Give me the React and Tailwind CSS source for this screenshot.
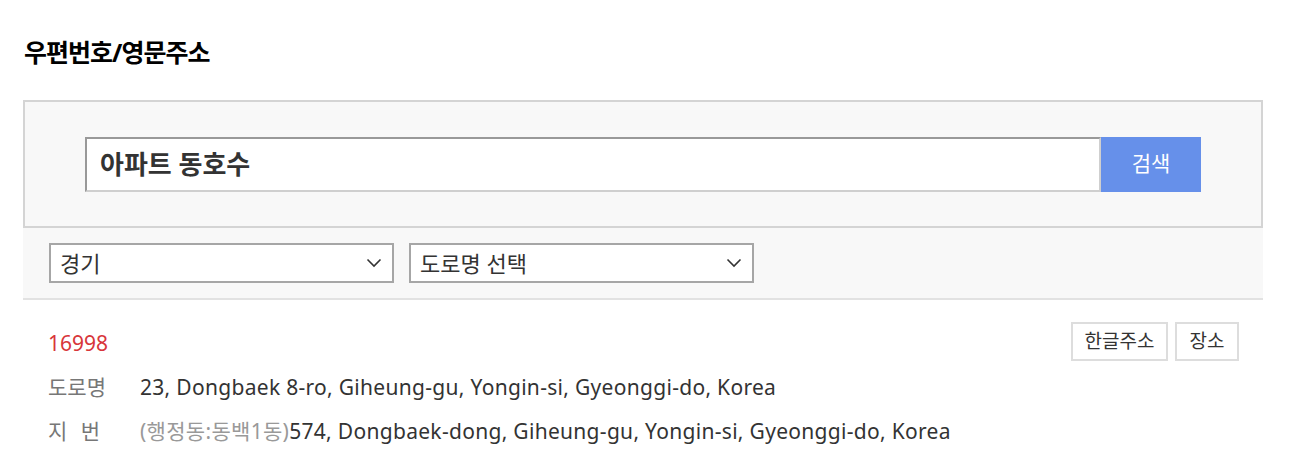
import React from 'react';

const font = { fontFamily: '"Noto Sans", "Noto Sans CJK KR", sans-serif' };

function Chevron() {
  return (
    <svg width="16" height="10" viewBox="0 0 16 10" className="shrink-0">
      <polyline points="1.5,1.5 8,8 14.5,1.5" fill="none" stroke="#333" strokeWidth="1.6" />
    </svg>
  );
}

function SelectBox({ label }) {
  return (
    <div className="flex items-center justify-between w-[345px] h-[40px] bg-white border-2 border-[#a6a6a6] pl-[9px] pr-[10px]">
      <span className="text-[22px] text-[#333] leading-none">{label}</span>
      <Chevron />
    </div>
  );
}

function SmallButton({ children, className = '' }) {
  return (
    <div className={`flex items-center justify-center h-[39px] border-2 border-[#dddddd] bg-white text-[19px] text-[#333] ${className}`}>
      {children}
    </div>
  );
}

export default function App() {
  return (
    <div className="w-[1290px] h-[470px] bg-white overflow-hidden" style={font}>
      <div className="ml-[23px] w-[1240px] pt-[36px]">
        <h1 className="text-[25px] font-bold leading-[32px] tracking-[-1px] text-black pl-[1px]">우편번호/영문주소</h1>

        <div className="mt-[32px] h-[128px] border-2 border-[#d4d4d4] bg-[#f8f8f8] flex items-center px-[60px]">
          <div className="flex-1 h-[55px] bg-white border-2 border-t-[#999] border-l-[#999] border-b-[#cfcfcf] border-r-[#cfcfcf] flex items-center pl-[13px]">
            <span className="text-[26px] font-bold text-[#333] leading-none">아파트 동호수</span>
          </div>
          <button className="w-[100px] h-[55px] bg-[#6690ea] text-white text-[21px] flex items-center justify-center">검색</button>
        </div>

        <div className="h-[72px] bg-[#f8f8f8] border-b-2 border-[#e2e2e2] flex items-center gap-[15px] pl-[26px]">
          <SelectBox label="경기" />
          <SelectBox label="도로명 선택" />
        </div>

        <div className="pt-[22px] pl-[25px] pr-[24px]">
          <div className="flex items-center justify-between h-[39px]">
            <span className="text-[21px] text-[#d8363a] leading-none mt-[3px]">16998</span>
            <div className="flex gap-[7px]">
              <SmallButton className="w-[97px]">한글주소</SmallButton>
              <SmallButton className="w-[64px]">장소</SmallButton>
            </div>
          </div>
          <div className="mt-[4px] flex h-[44px] items-center text-[21px] tracking-[0.3px] leading-none">
            <span className="w-[92px] text-[#777] tracking-normal">도로명</span>
            <span className="text-[#333]">23, Dongbaek 8-ro, Giheung-gu, Yongin-si, Gyeonggi-do, Korea</span>
          </div>
          <div className="flex h-[44px] items-center text-[21px] tracking-[0.3px] leading-none">
            <span className="w-[92px] text-[#777] flex gap-[13px]"><span>지</span><span>번</span></span>
            <span className="text-[#333]"><span className="text-[#999]">(행정동:동백1동)</span>574, Dongbaek-dong, Giheung-gu, Yongin-si, Gyeonggi-do, Korea</span>
          </div>
        </div>
      </div>
    </div>
  );
}
